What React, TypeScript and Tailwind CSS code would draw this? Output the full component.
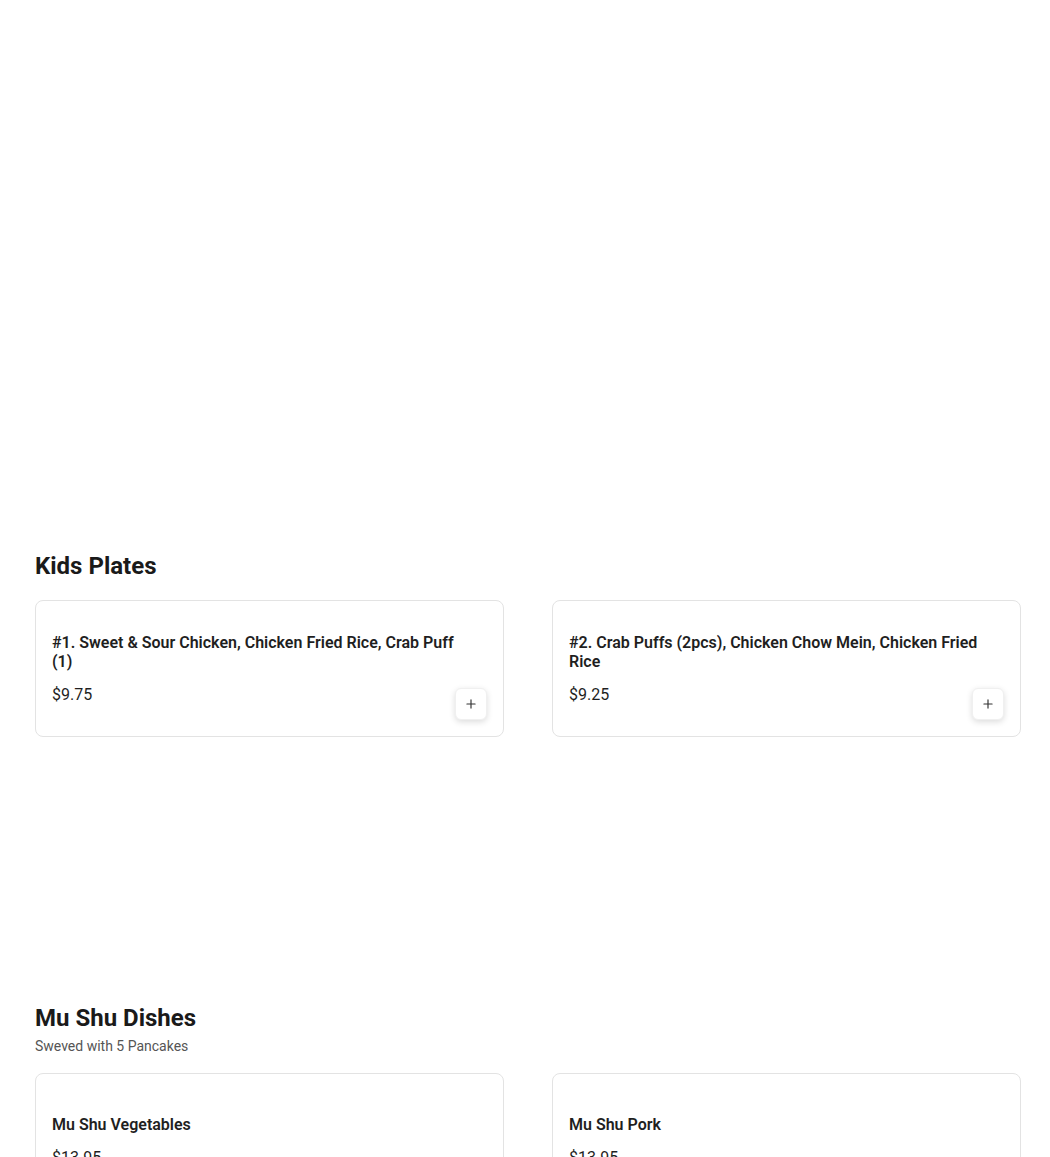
import { Plus } from 'lucide-react'

interface Item {
  name: string
  price: string
}

interface Section {
  title: string
  subtitle?: string
  items: Item[]
}

const sections: Section[] = [
  {
    title: 'Kids Plates',
    items: [
      { name: '#1. Sweet & Sour Chicken, Chicken Fried Rice, Crab Puff (1)', price: '$9.75' },
      { name: '#2. Crab Puffs (2pcs), Chicken Chow Mein, Chicken Fried Rice', price: '$9.25' },
    ],
  },
  {
    title: 'Mu Shu Dishes',
    subtitle: 'Sweved with 5 Pancakes',
    items: [
      { name: 'Mu Shu Vegetables', price: '$13.95' },
      { name: 'Mu Shu Pork', price: '$13.95' },
    ],
  },
]

function ItemCard({ item }: { item: Item }) {
  return (
    <div className="relative flex items-center min-h-[137px] px-4 pt-[18px] pb-4 bg-white border border-[#e3e3e3] rounded-lg">
      <div className="flex-1 flex flex-col gap-3 pr-4">
        <h3 className="text-base leading-[19px] font-semibold text-[#1f1f1f]">{item.name}</h3>
        <p className="text-base leading-6 text-[#1f1f1f]">{item.price}</p>
      </div>
      {/* add button sits in the bottom-right corner over the card */}
      <button className="absolute right-4 bottom-4 w-8 h-8 flex items-center justify-center rounded-md bg-white shadow-[0_2px_6px_rgba(0,0,0,0.14)] border border-[#f0f0f0] text-[#333]">
        <Plus className="w-3.5 h-3.5" strokeWidth={2} />
      </button>
    </div>
  )
}

export default function App() {
  return (
    <div className="min-h-screen bg-white pl-[35px] pr-[29px] pt-[550px] pb-10 font-['Roboto',_'Liberation_Sans',_sans-serif]">
      <div className="flex flex-col gap-[265px]">
        {sections.map(section => (
          <section key={section.title}>
            <div className={section.subtitle ? 'mb-[17px]' : 'mb-[18px]'}>
              <h2 className="text-2xl leading-8 font-bold text-[#1a1a1a]">{section.title}</h2>
              {section.subtitle && (
                <p className="text-sm leading-5 mt-0.5 text-[#555]">{section.subtitle}</p>
              )}
            </div>
            <div className="grid grid-cols-2 gap-12">
              {section.items.map(item => (
                <ItemCard key={item.name} item={item} />
              ))}
            </div>
          </section>
        ))}
      </div>
    </div>
  )
}
